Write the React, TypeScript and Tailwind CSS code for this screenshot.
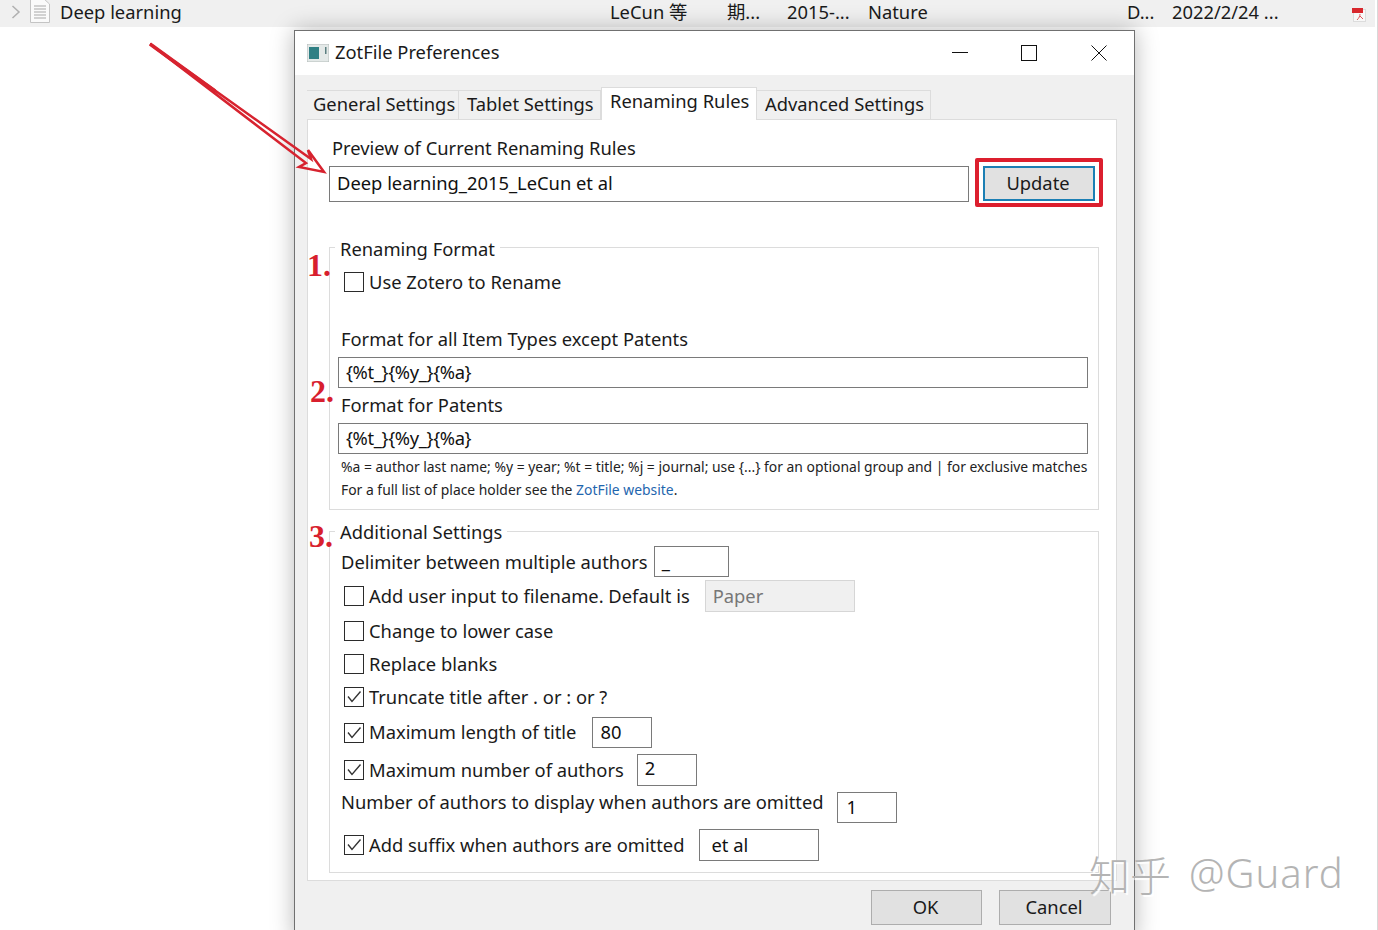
import { ReactNode } from "react";

const font = "font-['Noto_Sans','Noto_Sans_CJK_SC',sans-serif]";

function Box({ checked }: { checked?: boolean }) {
  return (
    <span className="mr-[5px] flex h-5 w-5 shrink-0 items-center justify-center border border-[#2b2b2b] bg-white">
      {checked && (
        <svg viewBox="0 0 18 18" className="h-[18px] w-[18px]">
          <path d="M3 8.5L7 13.5L15.5 3.5" fill="none" stroke="#333" strokeWidth="1.4" />
        </svg>
      )}
    </span>
  );
}

function Field({ value, className }: { value: string; className: string }) {
  return (
    <div className={`flex items-center border border-[#7a7a7a] bg-white pb-px pl-[7px] text-[#111] ${className}`}>
      {value}
    </div>
  );
}

function CheckRow({ label, checked, className, children }: { label: string; checked?: boolean; className: string; children?: ReactNode }) {
  return (
    <div className={`flex items-center pl-[14px] ${className}`}>
      <Box checked={checked} />
      <span className="-mt-px">{label}</span>
      {children}
    </div>
  );
}

function Group({ title, className, legend, children }: { title: string; className: string; legend: string; children: ReactNode }) {
  return (
    <div className={`relative ml-[21px] w-[770px] border border-[#dcdcdc] ${className}`}>
      <span className={`absolute left-[5px] bg-white px-[5px] leading-[26px] ${legend}`}>{title}</span>
      {children}
    </div>
  );
}

function Tab({ label, active, className }: { label: string; active?: boolean; className: string }) {
  return active ? (
    <div className={`relative z-10 -mb-px flex h-[33px] items-start whitespace-nowrap border border-b-0 border-[#dcdcdc] bg-white leading-[26px] ${className}`}>{label}</div>
  ) : (
    <div className={`flex h-[29px] items-center whitespace-nowrap border border-b-0 border-l-0 border-[#dcdcdc] bg-[#f0f0f0] pb-[3px] ${className}`}>{label}</div>
  );
}

function TopRow() {
  return (
    <div className="flex h-[27px] w-[1375px] items-center bg-[#f0f0f0] pb-[3px] text-[#1a1a1a]">
      <svg viewBox="0 0 10 14" className="ml-[11px] h-[14px] w-[10px]">
        <path d="M1.5 1L8 7L1.5 13" fill="none" stroke="#b0b0b0" strokeWidth="1.5" />
      </svg>
      <svg viewBox="0 0 20 24" className="ml-[9px] -mt-px h-6 w-5 self-start">
        <path d="M.5 -1H13L19.5 5V23.5H.5Z" fill="#fafafa" stroke="#c4c4c4" />
        <path d="M4 7H16M4 10H16M4 13H16M4 16H16M4 19H16" stroke="#a8a8a8" />
      </svg>
      <span className="ml-[10px] w-[550px]">Deep learning</span>
      <span className="w-[117px]">LeCun 等</span>
      <span className="w-[60px]">期...</span>
      <span className="w-[81px]">2015-...</span>
      <span className="w-[259px]">Nature</span>
      <span className="w-[45px]">D...</span>
      <span className="w-[180px]">2022/2/24 ...</span>
      <svg viewBox="0 0 14 14" className="mt-[6px] h-[14px] w-[14px]">
        <rect x="1.5" y="1.5" width="12" height="12" fill="#f8f8f8" stroke="#dcdcdc" />
        <rect y="0" width="11" height="5" fill="#d8272d" />
        <path d="M5 12C7 10 8 8 8 6M8 8L11 11" stroke="#e0565a" fill="none" />
      </svg>
    </div>
  );
}

function Dialog() {
  return (
    <div className="absolute left-[294px] top-[30px] h-[910px] w-[841px] border border-[#707070] bg-[#f0f0f0] shadow-[0_0_22px_rgba(0,0,0,0.28)]">
      <div className="flex h-[44px] items-center bg-white">
        <svg viewBox="0 0 22 18" className="ml-3 h-[18px] w-[22px]">
          <rect width="22" height="18" fill="#e4e9e8" stroke="#b5bcbb" />
          <rect x="2" y="3" width="10" height="12" fill="#2f7f84" />
          <rect x="18" y="3" width="1.5" height="7" fill="#5b7f80" />
        </svg>
        <span className="ml-[6px] flex-1 pb-[3px]">ZotFile Preferences</span>
        <svg viewBox="0 0 16 16" className="mr-[53px] h-4 w-4">
          <path d="M0 7.5H16" stroke="#111" />
        </svg>
        <svg viewBox="0 0 16 16" className="mr-[54px] h-4 w-4">
          <rect x="0.5" y="0.5" width="15" height="15" fill="none" stroke="#111" />
        </svg>
        <svg viewBox="0 0 16 16" className="mr-[27px] h-4 w-4">
          <path d="M.5 .5L15.5 15.5M15.5 .5L.5 15.5" stroke="#111" />
        </svg>
      </div>

      <div className="ml-3 mt-[15px] flex h-[29px] items-end">
        <Tab label="General Settings" className="w-[152px] border-l pl-[6px]" />
        <Tab label="Tablet Settings" className="w-[142px] pl-[8px]" />
        <Tab active label="Renaming Rules" className="w-[156px] pl-[8px]" />
        <Tab label="Advanced Settings" className="w-[174px] pl-[8px]" />
      </div>

      <div className="relative ml-3 h-[762px] w-[810px] border border-[#dcdcdc] bg-white">
        <div className="ml-[24px] mt-[14px] leading-[28px]">Preview of Current Renaming Rules</div>
        <div className="ml-[21px] mt-[4px] flex items-start">
          <Field value="Deep learning_2015_LeCun et al" className="h-[36px] w-[640px] pb-[3px]!" />
          <div className="-mb-[5px] -mt-[8px] ml-[6px] h-[49px] w-[128px] rounded-[2px] border-4 border-[#dc1f2e] px-1 pt-1">
            <div className="flex h-[35px] w-[112px] items-center justify-center border-2 border-[#1b7fb4] bg-[#e1e1e1] pb-px pr-[2px]">Update</div>
          </div>
        </div>

        <Group title="Renaming Format" legend="-top-[12px]" className="mt-[45px] h-[263px]">
          <CheckRow label="Use Zotero to Rename" className="mt-[24px] h-5" />
          <div className="ml-[11px] mt-[34px] leading-[26px]">Format for all Item Types except Patents</div>
          <Field value="{%t_}{%y_}{%a}" className="ml-2 mt-[5px] h-[31px] w-[750px] pb-[2px]! tracking-[-0.35px]" />
          <div className="ml-[11px] mt-[4px] leading-[26px]">Format for Patents</div>
          <Field value="{%t_}{%y_}{%a}" className="ml-2 mt-[5px] h-[31px] w-[750px] pb-[2px]! tracking-[-0.35px]" />
          <div className="ml-[11px] mt-[2px] whitespace-nowrap text-[13.9px] leading-[22px] text-[#222]">
            <p>%a = author last name; %y = year; %t = title; %j = journal; use {"{...}"} for an optional group and | for exclusive matches</p>
            <p className="mt-px">
              For a full list of place holder see the <span className="text-[#1f66ae]">ZotFile website</span>.
            </p>
          </div>
        </Group>

        <Group title="Additional Settings" legend="-top-[13px]" className="mt-[21px] h-[342px]">
          <div className="mt-[14px] flex h-[31px] items-center pl-[11px]">
            <span>Delimiter between multiple authors</span>
            <Field value="_" className="ml-[6px] h-[31px] w-[75px]" />
          </div>
          <CheckRow label="Add user input to filename. Default is" className="mt-[3px] h-8">
            <div className="ml-[15px] flex h-8 w-[150px] items-center border border-[#d6d6d6] bg-[#f0f0f0] pb-px pl-[7px] text-[#777]">Paper</div>
          </CheckRow>
          <CheckRow label="Change to lower case" className="mt-[9px] h-5" />
          <CheckRow label="Replace blanks" className="mt-[13px] h-5" />
          <CheckRow checked label="Truncate title after . or : or ?" className="mt-[13px] h-5" />
          <CheckRow checked label="Maximum length of title" className="mt-[10px] h-[31px]">
            <Field value="80" className="ml-[16px] h-[31px] w-[60px]" />
          </CheckRow>
          <CheckRow checked label="Maximum number of authors" className="mt-[6px] h-8">
            <Field value="2" className="ml-[13px] h-8 w-[60px] pb-1!" />
          </CheckRow>
          <div className="mt-[6px] flex h-[31px] items-start pl-[11px]">
            <span className="-mt-[4px]">Number of authors to display when authors are omitted</span>
            <Field value="1" className="ml-[13px] h-[31px] w-[60px] pl-[9px]!" />
          </div>
          <CheckRow checked label="Add suffix when authors are omitted" className="mt-[6px] h-8">
            <Field value="et al" className="ml-[14px] h-8 w-[120px] pl-3!" />
          </CheckRow>
        </Group>
      </div>

      <div className="mr-[23px] mt-[9px] flex justify-end gap-[17px]">
        <div className="flex h-[35px] w-[111px] items-center justify-center border border-[#adadad] bg-[#e1e1e1] pb-px pr-[2px]">OK</div>
        <div className="flex h-[35px] w-[112px] items-center justify-center border border-[#adadad] bg-[#e1e1e1] pb-px pr-[2px]">Cancel</div>
      </div>
    </div>
  );
}

export default function App() {
  return (
    <div className={`relative h-[930px] w-[1378px] overflow-hidden border-r border-[#d8d8d8] bg-white text-[18.35px] text-[#1a1a1a] ${font}`}>
      <TopRow />
      <Dialog />

      <svg viewBox="0 0 1378 930" className="pointer-events-none absolute left-0 top-0 h-[930px] w-[1378px]">
        <path d="M150 44L311 159L308 150L324 172L299 167L306 163Z" fill="none" stroke="#d7232f" strokeWidth="2.5" />
        <path d="M150 44L215 91" stroke="#d7232f" strokeWidth="3.5" />
      </svg>

      {[
        { n: "1.", c: "left-[307px] top-[247px]" },
        { n: "2.", c: "left-[310px] top-[373px]" },
        { n: "3.", c: "left-[309px] top-[518px]" },
      ].map((m) => (
        <span key={m.n} className={`absolute font-['Liberation_Serif',serif] text-[32px] font-bold leading-[36px] text-[#d81f2e] ${m.c}`}>
          {m.n}
        </span>
      ))}

      <div className="absolute left-[1089px] top-[847px] flex items-center gap-[18px] text-[40px] font-light leading-[52px] text-[#b4b4b4] [text-shadow:2px_2px_1px_#ffffff]">
        <span className="font-['Noto_Sans_CJK_SC',sans-serif] text-[41px]">知乎</span>
        <span className="tracking-[1px]">@Guard</span>
      </div>
    </div>
  );
}
